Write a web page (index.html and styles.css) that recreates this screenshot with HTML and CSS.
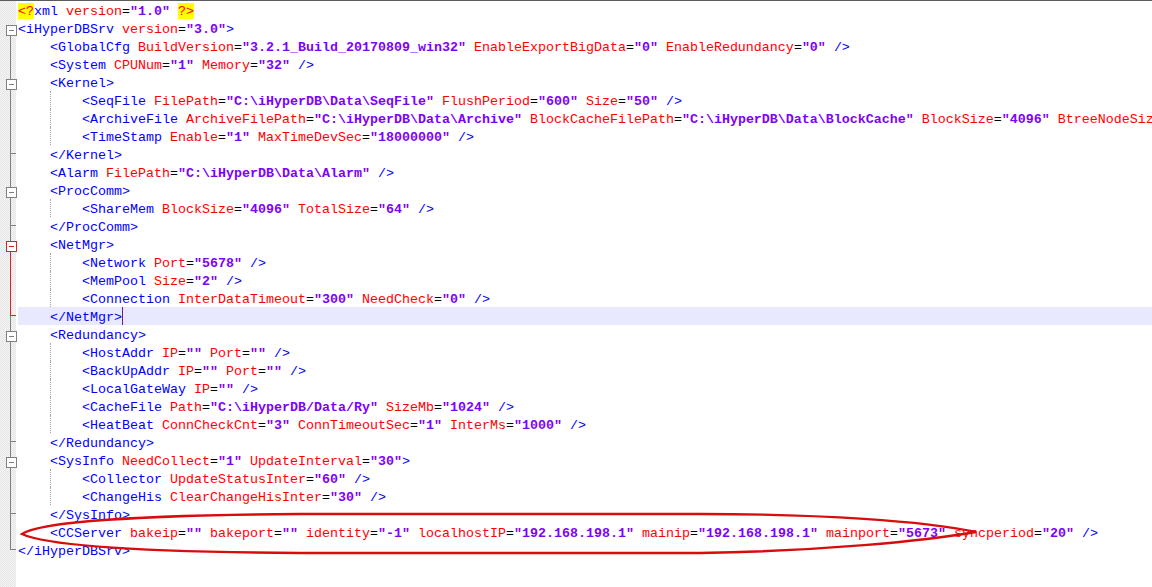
FILE: index.html
```html
<!DOCTYPE html>
<html lang="en">
<head>
    <meta charset="UTF-8">
    <meta name="viewport" content="width=device-width, initial-scale=1.0">
    <title>config.xml</title>
    <link rel="stylesheet" href="styles.css">
</head>
<body>
    <div class="editor">
        <div class="row"><span class="fold"></span><span class="code"><span class="pi">&lt;?</span><span class="tg">xml</span> <span class="at">version</span>=<span class="vl">"1.0"</span> <span class="pi">?&gt;</span></span></div>
        <div class="row"><span class="fold open first"></span><span class="code"><span class="tg">&lt;iHyperDBSrv</span> <span class="at">version</span>=<span class="vl">"3.0"</span><span class="tg">&gt;</span></span></div>
        <div class="row"><span class="fold line"></span><span class="code">    <span class="tg">&lt;GlobalCfg</span> <span class="at">BuildVersion</span>=<span class="vl">"3.2.1_Build_20170809_win32"</span> <span class="at">EnableExportBigData</span>=<span class="vl">"0"</span> <span class="at">EnableRedundancy</span>=<span class="vl">"0"</span> <span class="tg">/&gt;</span></span></div>
        <div class="row"><span class="fold line"></span><span class="code">    <span class="tg">&lt;System</span> <span class="at">CPUNum</span>=<span class="vl">"1"</span> <span class="at">Memory</span>=<span class="vl">"32"</span> <span class="tg">/&gt;</span></span></div>
        <div class="row"><span class="fold open"></span><span class="code">    <span class="tg">&lt;Kernel&gt;</span></span></div>
        <div class="row"><span class="fold line"></span><span class="code">    <span class="guide">    </span><span class="tg">&lt;SeqFile</span> <span class="at">FilePath</span>=<span class="vl">"C:\iHyperDB\Data\SeqFile"</span> <span class="at">FlushPeriod</span>=<span class="vl">"600"</span> <span class="at">Size</span>=<span class="vl">"50"</span> <span class="tg">/&gt;</span></span></div>
        <div class="row"><span class="fold line"></span><span class="code">    <span class="guide">    </span><span class="tg">&lt;ArchiveFile</span> <span class="at">ArchiveFilePath</span>=<span class="vl">"C:\iHyperDB\Data\Archive"</span> <span class="at">BlockCacheFilePath</span>=<span class="vl">"C:\iHyperDB\Data\BlockCache"</span> <span class="at">BlockSize</span>=<span class="vl">"4096"</span> <span class="at">BtreeNodeSiz</span></span></div>
        <div class="row"><span class="fold line"></span><span class="code">    <span class="guide">    </span><span class="tg">&lt;TimeStamp</span> <span class="at">Enable</span>=<span class="vl">"1"</span> <span class="at">MaxTimeDevSec</span>=<span class="vl">"18000000"</span> <span class="tg">/&gt;</span></span></div>
        <div class="row"><span class="fold tee"></span><span class="code">    <span class="tg">&lt;/Kernel&gt;</span></span></div>
        <div class="row"><span class="fold line"></span><span class="code">    <span class="tg">&lt;Alarm</span> <span class="at">FilePath</span>=<span class="vl">"C:\iHyperDB\Data\Alarm"</span> <span class="tg">/&gt;</span></span></div>
        <div class="row"><span class="fold open"></span><span class="code">    <span class="tg">&lt;ProcComm&gt;</span></span></div>
        <div class="row"><span class="fold line"></span><span class="code">    <span class="guide">    </span><span class="tg">&lt;ShareMem</span> <span class="at">BlockSize</span>=<span class="vl">"4096"</span> <span class="at">TotalSize</span>=<span class="vl">"64"</span> <span class="tg">/&gt;</span></span></div>
        <div class="row"><span class="fold tee"></span><span class="code">    <span class="tg">&lt;/ProcComm&gt;</span></span></div>
        <div class="row"><span class="fold open red"></span><span class="code">    <span class="tg">&lt;NetMgr&gt;</span></span></div>
        <div class="row"><span class="fold line red"></span><span class="code">    <span class="guide">    </span><span class="tg">&lt;Network</span> <span class="at">Port</span>=<span class="vl">"5678"</span> <span class="tg">/&gt;</span></span></div>
        <div class="row"><span class="fold line red"></span><span class="code">    <span class="guide">    </span><span class="tg">&lt;MemPool</span> <span class="at">Size</span>=<span class="vl">"2"</span> <span class="tg">/&gt;</span></span></div>
        <div class="row"><span class="fold line red"></span><span class="code">    <span class="guide">    </span><span class="tg">&lt;Connection</span> <span class="at">InterDataTimeout</span>=<span class="vl">"300"</span> <span class="at">NeedCheck</span>=<span class="vl">"0"</span> <span class="tg">/&gt;</span></span></div>
        <div class="row"><span class="fold tee red"></span><span class="code current">    <span class="tg">&lt;/NetMgr&gt;</span><span class="caret"></span></span></div>
        <div class="row"><span class="fold open"></span><span class="code">    <span class="tg">&lt;Redundancy&gt;</span></span></div>
        <div class="row"><span class="fold line"></span><span class="code">    <span class="guide">    </span><span class="tg">&lt;HostAddr</span> <span class="at">IP</span>=<span class="vl">""</span> <span class="at">Port</span>=<span class="vl">""</span> <span class="tg">/&gt;</span></span></div>
        <div class="row"><span class="fold line"></span><span class="code">    <span class="guide">    </span><span class="tg">&lt;BackUpAddr</span> <span class="at">IP</span>=<span class="vl">""</span> <span class="at">Port</span>=<span class="vl">""</span> <span class="tg">/&gt;</span></span></div>
        <div class="row"><span class="fold line"></span><span class="code">    <span class="guide">    </span><span class="tg">&lt;LocalGateWay</span> <span class="at">IP</span>=<span class="vl">""</span> <span class="tg">/&gt;</span></span></div>
        <div class="row"><span class="fold line"></span><span class="code">    <span class="guide">    </span><span class="tg">&lt;CacheFile</span> <span class="at">Path</span>=<span class="vl">"C:\iHyperDB/Data/Ry"</span> <span class="at">SizeMb</span>=<span class="vl">"1024"</span> <span class="tg">/&gt;</span></span></div>
        <div class="row"><span class="fold line"></span><span class="code">    <span class="guide">    </span><span class="tg">&lt;HeatBeat</span> <span class="at">ConnCheckCnt</span>=<span class="vl">"3"</span> <span class="at">ConnTimeoutSec</span>=<span class="vl">"1"</span> <span class="at">InterMs</span>=<span class="vl">"1000"</span> <span class="tg">/&gt;</span></span></div>
        <div class="row"><span class="fold tee"></span><span class="code">    <span class="tg">&lt;/Redundancy&gt;</span></span></div>
        <div class="row"><span class="fold open"></span><span class="code">    <span class="tg">&lt;SysInfo</span> <span class="at">NeedCollect</span>=<span class="vl">"1"</span> <span class="at">UpdateInterval</span>=<span class="vl">"30"</span><span class="tg">&gt;</span></span></div>
        <div class="row"><span class="fold line"></span><span class="code">    <span class="guide">    </span><span class="tg">&lt;Collector</span> <span class="at">UpdateStatusInter</span>=<span class="vl">"60"</span> <span class="tg">/&gt;</span></span></div>
        <div class="row"><span class="fold line"></span><span class="code">    <span class="guide">    </span><span class="tg">&lt;ChangeHis</span> <span class="at">ClearChangeHisInter</span>=<span class="vl">"30"</span> <span class="tg">/&gt;</span></span></div>
        <div class="row"><span class="fold tee"></span><span class="code">    <span class="tg">&lt;/SysInfo&gt;</span></span></div>
        <div class="row"><span class="fold line"></span><span class="code">    <span class="tg">&lt;CCServer</span> <span class="at">bakeip</span>=<span class="vl">""</span> <span class="at">bakeport</span>=<span class="vl">""</span> <span class="at">identity</span>=<span class="vl">"-1"</span> <span class="at">localhostIP</span>=<span class="vl">"192.168.198.1"</span> <span class="at">mainip</span>=<span class="vl">"192.168.198.1"</span> <span class="at">mainport</span>=<span class="vl">"5673"</span> <span class="at">syncperiod</span>=<span class="vl">"20"</span> <span class="tg">/&gt;</span></span></div>
        <div class="row"><span class="fold end"></span><span class="code"><span class="tg">&lt;/iHyperDBSrv&gt;</span></span></div>

        <!-- hand drawn mark round the CCServer line -->
        <svg class="mark" width="1152" height="587" viewBox="0 0 1152 587">
            <path d="M22 534 C40 522 140 515 300 514 L700 514 C820 514 925 521 976 532 C925 541 820 551 700 553 L300 553 C150 552 48 546 22 534 Z" fill="none" stroke="#d80c0c" stroke-width="2.4"/>
        </svg>
    </div>
</body>
</html>
```

FILE: styles.css
```css
*{
    box-sizing: border-box;
    padding: 0;
    margin: 0;
}
html, body{
    height: 100%;
    overflow: hidden;
    background: #fff;
}
.editor{
    position: relative;
    height: 100%;
    border-top: 1px solid #5c5c5c;
    background:
        linear-gradient(to right, transparent 16px, #fff 16px),
        repeating-conic-gradient(#e4e4e4 0 25%, #f6f6f6 0 50%) 0 0 / 2px 2px;
    font-family: "Liberation Mono", "Courier New", monospace;
    font-size: 13.333px;
    color: #000;
}
.row{
    display: flex;
    height: 18px;
    white-space: pre;
    overflow: hidden;
}
.code{
    flex: 1;
    margin-left: 2px;
    height: 18px;
    line-height: 22px;
    overflow: hidden;
}
.code.current{
    background: #e8e8ff;
}
.tg{
    color: #0000ff;
}
.at{
    color: #ff0000;
}
.vl{
    color: #8000ff;
    font-weight: bold;
}
.pi{
    display: inline-block;
    height: 16px;
    line-height: 18px;
    vertical-align: top;
    margin-top: 2px;
    color: #ff0000;
    background: #ffff00;
}
.guide{
    display: inline-block;
    width: 32px;
    height: 18px;
    vertical-align: top;
    border-left: 1px dotted #a8a8a8;
}
.caret{
    display: inline-block;
    width: 0;
    height: 18px;
    vertical-align: top;
    border-left: 1px solid #6a1a9a;
}

/* fold margin */
.fold{
    position: relative;
    width: 16px;
    height: 18px;
    flex-shrink: 0;
}
.fold::before,
.fold::after{
    content: "";
    position: absolute;
}
.fold.line::before,
.fold.open::before,
.fold.tee::before{
    left: 10px;
    top: 0;
    width: 1px;
    height: 18px;
    background: #808080;
}
.fold.open.first::before{
    top: 15px;
    height: 3px;
}
.fold.open::after{
    left: 6px;
    top: 6px;
    width: 9px;
    height: 9px;
    border: 1px solid #808080;
    background: linear-gradient(#808080, #808080) center / 5px 1px no-repeat, #fff;
}
.fold.tee::after{
    left: 10px;
    top: 8px;
    width: 6px;
    height: 1px;
    background: #808080;
}
.fold.end::before{
    left: 10px;
    top: 0;
    width: 1px;
    height: 9px;
    background: #808080;
}
.fold.end::after{
    left: 10px;
    top: 8px;
    width: 6px;
    height: 1px;
    background: #808080;
}

/* fold block under the caret */
.fold.open.red{
    background: linear-gradient(#808080, #808080) 10px 0 / 1px 6px no-repeat;
}
.fold.open.red::before{
    top: 15px;
    height: 3px;
    background: #e02020;
}
.fold.open.red::after{
    border-color: #e02020;
    background: linear-gradient(#e02020, #e02020) center / 5px 1px no-repeat, #fff;
}
.fold.line.red::before{
    background: #e02020;
}
.fold.tee.red{
    background: linear-gradient(#808080, #808080) 10px 9px / 1px 9px no-repeat;
}
.fold.tee.red::before{
    height: 9px;
    background: #e02020;
}
.fold.tee.red::after{
    background: #e02020;
}

.mark{
    position: absolute;
    left: 0;
    top: -1px;
    pointer-events: none;
}
```
